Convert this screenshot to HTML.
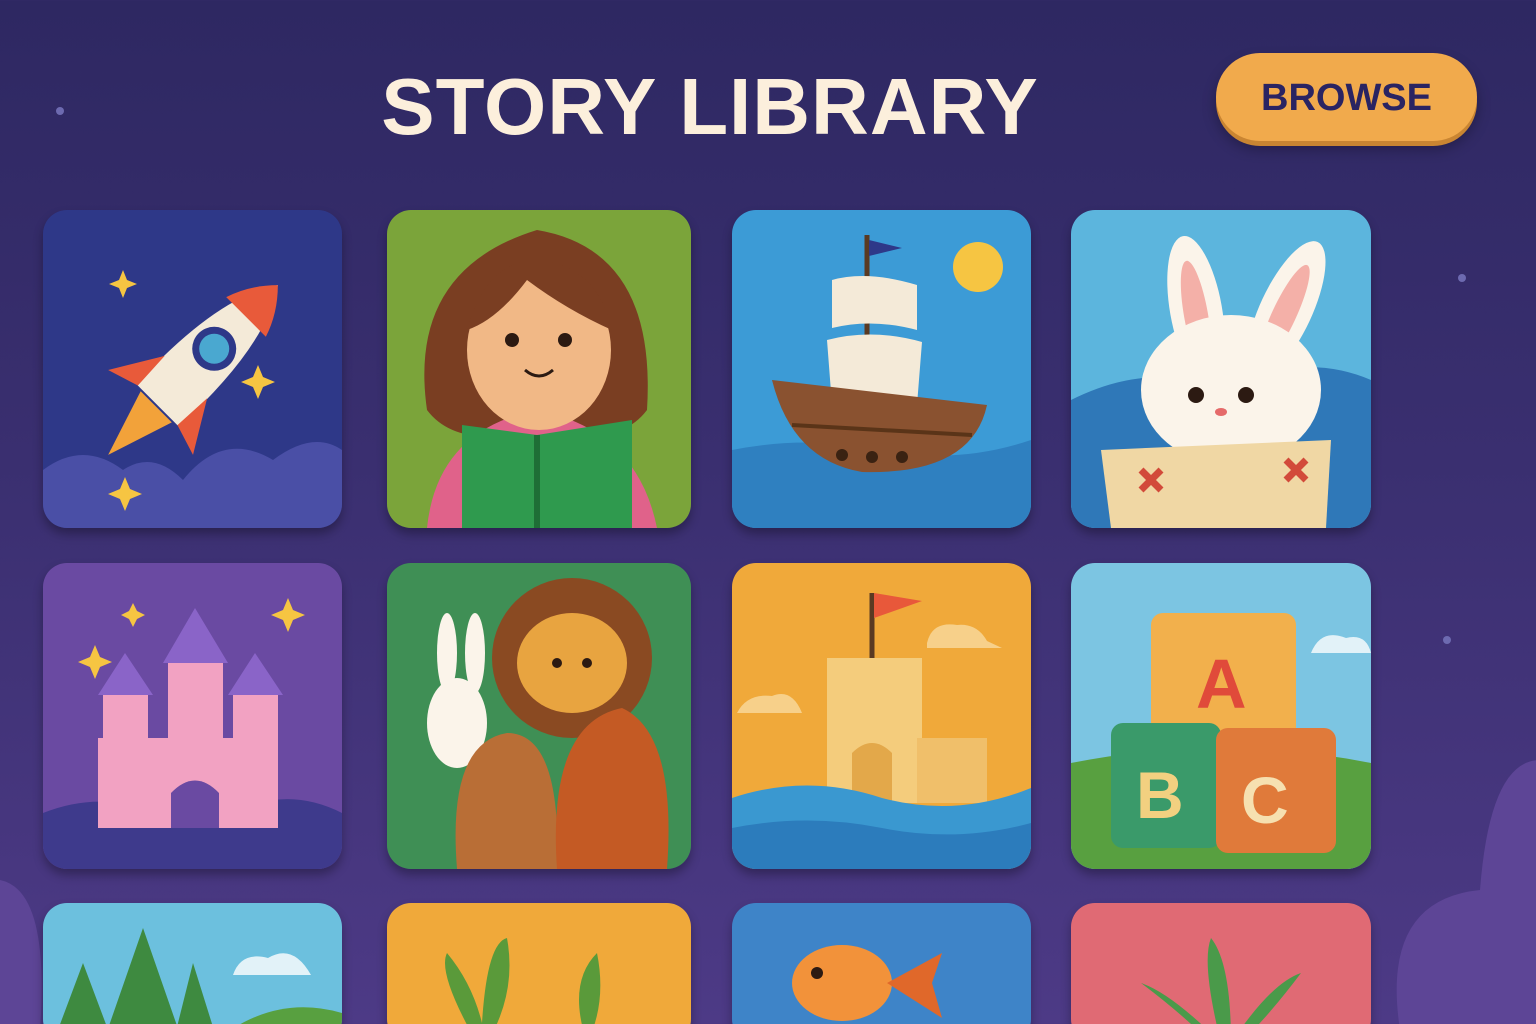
<!DOCTYPE html>
<html><head><meta charset="utf-8"><style>
*{margin:0;padding:0;box-sizing:border-box}
html{width:1536px;height:1024px;overflow:hidden}
body{width:1536px;height:1024px;overflow:hidden;position:relative;background:linear-gradient(180deg,#2e2862 0%,#3a2f70 45%,#4d3a86 100%);font-family:"Liberation Sans",sans-serif}
h1{position:absolute;left:340px;top:62px;width:740px;text-align:center;color:#fcefdc;font-size:80px;font-weight:bold;letter-spacing:1px;line-height:90px;white-space:nowrap}
.btn{position:absolute;left:1216px;top:53px;width:261px;height:88px;border-radius:44px;background:#f1aa4c;box-shadow:0 5px 0 #c98532,0 8px 14px rgba(0,0,0,.3);color:#2a2462;font-weight:bold;font-size:38px;text-align:center;line-height:90px}
.t{position:absolute;border-radius:24px;overflow:hidden;box-shadow:0 6px 10px rgba(0,0,0,.3)}
.t svg{width:100%;height:100%;display:block}
.dot{position:absolute;width:8px;height:8px;border-radius:50%;background:#6d6ab0}
</style></head><body>
<h1>STORY LIBRARY</h1>
<div class="btn">BROWSE</div>
<div class="dot" style="left:56px;top:107px"></div>
<div class="dot" style="left:1458px;top:274px"></div>
<div class="dot" style="left:1443px;top:636px"></div>
<svg style="position:absolute;left:1360px;top:740px" width="180" height="290"><path d="M40 290 Q20 160 120 150 Q130 20 180 20 L180 290Z" fill="#5d4596"/></svg>
<svg style="position:absolute;left:0;top:870px" width="60" height="160"><path d="M0 10 Q50 20 40 160 L0 160Z" fill="#5d4596"/></svg>

<!-- row 1 -->
<div class="t" style="left:43px;top:210px;width:299px;height:318px"><svg viewBox="0 0 299 318"><rect width="299" height="318" fill="#2e3888"/>
<path d="M0 260 Q40 230 80 260 Q110 240 140 270 Q180 220 230 250 Q270 220 299 240 L299 318 L0 318Z" fill="#4a4fa6"/>
<g transform="rotate(45 150 160)"><path d="M150 40 Q185 90 180 210 L120 210 Q115 90 150 40Z" fill="#f4ead8"/><path d="M150 40 Q170 60 178 85 L122 85 Q130 60 150 40Z" fill="#e85a3a"/><circle cx="150" cy="130" r="22" fill="#2e3888"/><circle cx="150" cy="130" r="15" fill="#4aa8d0"/><path d="M120 170 L90 220 L122 210Z M180 170 L210 220 L178 210Z" fill="#e85a3a"/><path d="M128 212 L150 280 L172 212Z" fill="#f2a23a"/></g>
<path d="M112 272 l5 12 12 5 -12 5 -5 12 -5 -12 -12 -5 12 -5z M245 160 l5 12 12 5 -12 5 -5 12 -5 -12 -12 -5 12 -5z M110 65 l4 10 10 4 -10 4 -4 10 -4 -10 -10 -4 10 -4z" fill="#f6c542" transform="translate(-30 -5)"/></svg></div>

<div class="t" style="left:387px;top:210px;width:304px;height:318px"><svg viewBox="0 0 304 318"><rect width="304" height="318" fill="#7ba43a"/>
<path d="M40 200 Q20 60 150 20 Q270 40 260 200 Q230 240 150 220 Q70 240 40 200Z" fill="#7a3e22"/>
<path d="M40 318 Q50 220 150 200 Q250 220 270 318Z" fill="#e0628a"/>
<ellipse cx="152" cy="140" rx="72" ry="80" fill="#f1b886"/>
<path d="M80 120 Q100 50 150 50 Q210 55 225 120 Q180 100 140 70 Q110 110 80 120Z" fill="#7a3e22"/>
<circle cx="125" cy="130" r="7" fill="#2c1a12"/><circle cx="178" cy="130" r="7" fill="#2c1a12"/><path d="M138 160 Q152 172 166 160" stroke="#2c1a12" stroke-width="3" fill="none"/>
<path d="M75 215 L150 225 L150 318 L75 318Z M150 225 L245 210 L245 318 L150 318Z" fill="#2f9a4e"/><path d="M150 225 L150 318" stroke="#1e6e36" stroke-width="6"/></svg></div>

<div class="t" style="left:732px;top:210px;width:299px;height:318px"><svg viewBox="0 0 299 318"><rect width="299" height="318" fill="#3c9bd6"/>
<circle cx="246" cy="57" r="25" fill="#f6c542"/>
<path d="M0 240 Q75 225 150 240 Q225 255 299 230 L299 318 L0 318Z" fill="#2f80c0"/>
<path d="M135 25 L135 240" stroke="#5a3a22" stroke-width="5"/><path d="M137 30 L170 38 L137 46Z" fill="#2e3888"/>
<path d="M100 70 Q135 60 185 75 L185 120 Q140 108 100 118Z M95 130 Q140 118 190 132 L185 195 Q140 185 100 195Z" fill="#f4ead8"/>
<path d="M40 170 L255 195 Q240 265 130 262 Q60 250 40 170Z" fill="#8a5230"/><path d="M60 215 L240 225" stroke="#5a3418" stroke-width="4"/>
<circle cx="110" cy="245" r="6" fill="#3a2212"/><circle cx="140" cy="247" r="6" fill="#3a2212"/><circle cx="170" cy="247" r="6" fill="#3a2212"/></svg></div>

<div class="t" style="left:1071px;top:210px;width:300px;height:318px"><svg viewBox="0 0 300 318"><rect width="300" height="318" fill="#5cb5dd"/>
<path d="M0 190 Q80 150 150 180 Q230 140 300 170 L300 318 L0 318Z" fill="#2f78b8"/>
<ellipse cx="125" cy="100" rx="26" ry="75" fill="#fbf4ea" transform="rotate(-10 125 100)"/><ellipse cx="215" cy="100" rx="26" ry="75" fill="#fbf4ea" transform="rotate(25 215 100)"/>
<ellipse cx="125" cy="105" rx="12" ry="55" fill="#f4b0a8" transform="rotate(-10 125 105)"/><ellipse cx="213" cy="105" rx="12" ry="55" fill="#f4b0a8" transform="rotate(25 213 105)"/>
<ellipse cx="160" cy="180" rx="90" ry="75" fill="#fbf4ea"/>
<circle cx="125" cy="185" r="8" fill="#2c1a12"/><circle cx="175" cy="185" r="8" fill="#2c1a12"/><ellipse cx="150" cy="202" rx="6" ry="4" fill="#e56a6a"/>
<path d="M30 240 L260 230 L255 318 L40 318Z" fill="#f0d7a4"/><path d="M70 260 l20 20 M90 260 l-20 20 M215 250 l20 20 M235 250 l-20 20" stroke="#d24a3a" stroke-width="7"/></svg></div>

<!-- row 2 -->
<div class="t" style="left:43px;top:563px;width:299px;height:306px"><svg viewBox="0 0 299 306"><rect width="299" height="306" fill="#6a4aa2"/>
<path d="M0 250 Q50 230 100 245 Q150 225 200 245 Q250 225 299 250 L299 306 L0 306Z" fill="#3e3a8c"/>
<rect x="55" y="175" width="180" height="90" fill="#f2a2c2"/><rect x="125" y="100" width="55" height="165" fill="#f2a2c2"/>
<rect x="60" y="130" width="45" height="135" fill="#f2a2c2"/><rect x="190" y="130" width="45" height="135" fill="#f2a2c2"/>
<path d="M120 100 L152 45 L185 100Z M55 132 L82 90 L110 132Z M185 132 L212 90 L240 132Z" fill="#8a64c8"/>
<path d="M128 265 L128 230 Q152 205 176 230 L176 265Z" fill="#6a4aa2"/>
<path d="M52 82 l5 12 12 5 -12 5 -5 12 -5 -12 -12 -5 12 -5z M245 35 l5 12 12 5 -12 5 -5 12 -5 -12 -12 -5 12 -5z M90 40 l4 8 8 4 -8 4 -4 8 -4 -8 -8 -4 8 -4z" fill="#f6c542"/></svg></div>

<div class="t" style="left:387px;top:563px;width:304px;height:306px"><svg viewBox="0 0 304 306"><rect width="304" height="306" fill="#3f8f55"/>
<circle cx="185" cy="95" r="80" fill="#8a4a22"/><ellipse cx="185" cy="100" rx="55" ry="50" fill="#e8a440"/>
<ellipse cx="70" cy="160" rx="30" ry="45" fill="#fbf4ea"/><ellipse cx="60" cy="90" rx="10" ry="40" fill="#fbf4ea"/><ellipse cx="88" cy="90" rx="10" ry="40" fill="#fbf4ea"/>
<path d="M70 306 Q60 180 120 170 Q175 170 170 306Z" fill="#b96e36"/>
<path d="M170 306 Q160 160 235 145 Q290 170 280 306Z" fill="#c45a24"/>
<circle cx="170" cy="100" r="5" fill="#2c1a12"/><circle cx="200" cy="100" r="5" fill="#2c1a12"/></svg></div>

<div class="t" style="left:732px;top:563px;width:299px;height:306px"><svg viewBox="0 0 299 306"><rect width="299" height="306" fill="#f0a93a"/>
<path d="M195 80 Q200 58 225 62 Q245 60 255 78 L270 85 L195 85Z M5 150 Q15 130 40 133 Q60 125 70 150Z" fill="#f7d08a"/>
<path d="M95 240 L95 95 L190 95 L190 240Z" fill="#f4cc7c"/><path d="M185 240 L185 175 L255 175 L255 240Z" fill="#f0bf6a"/>
<path d="M140 95 L140 30" stroke="#5a3a22" stroke-width="5"/><path d="M142 30 L190 38 L142 55Z" fill="#e8583a"/>
<path d="M120 240 L120 190 Q140 170 160 190 L160 240Z" fill="#e3a84a"/>
<path d="M0 235 Q75 210 150 235 Q225 255 299 225 L299 306 L0 306Z" fill="#3a98d0"/><path d="M0 265 Q75 250 150 265 Q225 280 299 260 L299 306 L0 306Z" fill="#2c7cbc"/></svg></div>

<div class="t" style="left:1071px;top:563px;width:300px;height:306px"><svg viewBox="0 0 300 306"><rect width="300" height="306" fill="#7cc5e2"/>
<path d="M0 200 Q150 170 300 200 L300 306 L0 306Z" fill="#58a040"/>
<path d="M240 90 Q250 65 275 75 Q295 70 300 90Z" fill="#e2f2f8"/>
<rect x="80" y="50" width="145" height="130" rx="12" fill="#f2b04c"/><text x="125" y="145" font-family="Liberation Sans" font-weight="bold" font-size="70" fill="#e04a3a">A</text>
<rect x="40" y="160" width="110" height="125" rx="12" fill="#3a9a6a"/><text x="65" y="255" font-family="Liberation Sans" font-weight="bold" font-size="66" fill="#f2d080">B</text>
<rect x="145" y="165" width="120" height="125" rx="12" fill="#e07a3a"/><text x="170" y="260" font-family="Liberation Sans" font-weight="bold" font-size="66" fill="#f6e0b0">C</text></svg></div>

<!-- row 3 -->
<div class="t" style="left:43px;top:903px;width:299px;height:140px"><svg viewBox="0 0 299 140"><rect width="299" height="140" fill="#6cc0de"/>
<path d="M10 140 L40 60 L70 140Z M60 140 L100 25 L140 140Z M130 140 L150 60 L175 140Z" fill="#3e8a40"/><path d="M170 140 Q230 90 299 110 L299 140Z" fill="#58a040"/>
<path d="M190 72 Q198 48 225 55 Q250 40 268 72Z" fill="#e2f2f8"/></svg></div>
<div class="t" style="left:387px;top:903px;width:304px;height:140px"><svg viewBox="0 0 304 140"><rect width="304" height="140" fill="#f0a93a"/>
<path d="M90 140 Q50 70 60 50 Q85 80 95 120 Q100 40 120 35 Q130 90 100 140Z M200 140 Q180 80 210 50 Q220 100 200 140Z" fill="#5a9a3a"/></svg></div>
<div class="t" style="left:732px;top:903px;width:299px;height:140px"><svg viewBox="0 0 299 140"><rect width="299" height="140" fill="#3e84c8"/>
<ellipse cx="110" cy="80" rx="50" ry="38" fill="#f2923a"/><path d="M155 80 L210 50 L200 80 L210 115Z" fill="#e0682a"/><circle cx="85" cy="70" r="6" fill="#2c1a12"/></svg></div>
<div class="t" style="left:1071px;top:903px;width:300px;height:140px"><svg viewBox="0 0 300 140"><rect width="300" height="140" fill="#e06a74"/>
<path d="M150 140 Q130 60 140 35 Q160 60 160 140Z M150 140 Q100 90 70 80 Q110 110 140 140Z M160 140 Q200 80 230 70 Q200 110 170 140Z" fill="#4a9a4a"/></svg></div>
</body></html>
